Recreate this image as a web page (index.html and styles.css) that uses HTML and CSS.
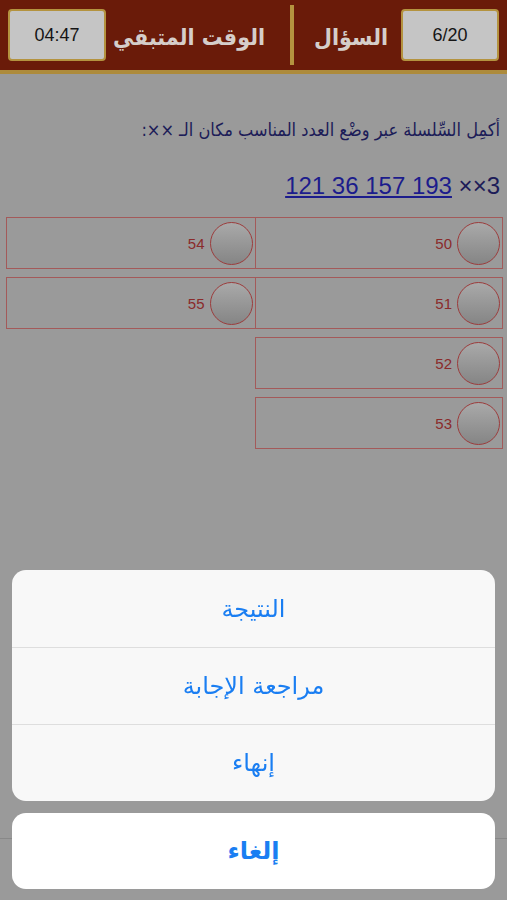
FILE: index.html
```
<!DOCTYPE html>
<html lang="ar">
<head>
<meta charset="utf-8">
<title>اختبار</title>
<link rel="stylesheet" href="styles.css">
</head>
<body>
<div class="page">
  <header class="topbar">
    <div class="box">6/20</div>
    <div class="label label-q">السؤال</div>
    <div class="sep"></div>
    <div class="label label-t">الوقت المتبقي</div>
    <div class="box">04:47</div>
  </header>

  <main class="content">
    <p class="question">أكمِل السِّلسلة عبر وضْع العدد المناسب مكان الـ ××:</p>
    <p class="series"><a href="#" class="seq">121 36 157 193</a> ××3</p>

    <div class="options">
      <div class="opt"><span class="num">50</span><span class="radio"></span></div>
      <div class="opt"><span class="num">54</span><span class="radio"></span></div>
      <div class="opt"><span class="num">51</span><span class="radio"></span></div>
      <div class="opt"><span class="num">55</span><span class="radio"></span></div>
      <div class="opt"><span class="num">52</span><span class="radio"></span></div>
      <div class="empty"></div>
      <div class="opt"><span class="num">53</span><span class="radio"></span></div>
      <div class="empty"></div>
    </div>
  </main>

  <footer class="toolbar"></footer>
</div>

<div class="sheet-layer">
  <div class="sheet">
    <div class="group">
      <div class="action">النتيجة</div>
      <div class="action">مراجعة الإجابة</div>
      <div class="action">إنهاء</div>
    </div>
    <div class="cancel">إلغاء</div>
  </div>
</div>
</body>
</html>
```
FILE: styles.css
```
html, body {
  margin: 0;
  padding: 0;
  background: #9a9a9a;
}
body {
  font-family: "DejaVu Sans", "Noto Sans", sans-serif;
}
.page {
  display: flex;
  flex-direction: column;
  min-height: 900px;
}
.topbar {
  direction: rtl;
  display: flex;
  align-items: center;
  height: 74px;
  padding: 0 8px;
  box-sizing: border-box;
  background: #6a1b09;
  border-bottom: 4px solid #ad8b3c;
}
.box {
  flex: none;
  width: 98px;
  height: 52px;
  box-sizing: border-box;
  border: 2px solid #b4933f;
  border-radius: 4px;
  background: #c5c5c5;
  color: #151515;
  font-family: "Liberation Sans", Arial, sans-serif;
  font-size: 18px;
  display: flex;
  align-items: center;
  justify-content: center;
}
.label {
  white-space: nowrap;
  text-align: center;
  color: #d5ceca;
  font-family: "DejaVu Sans Condensed", "DejaVu Sans", sans-serif;
  font-weight: bold;
  font-size: 23px;
  padding-top: 4px;
}
.label-q {
  flex: none;
  margin: 0 13px 0 20px;
}
.label-t {
  flex: 1;
  min-width: 0;
  padding-right: 18px;
}
.sep {
  flex: none;
  width: 4px;
  height: 60px;
  background: #b4933f;
}
.content {
  direction: rtl;
  padding: 0 4px 0 6px;
}
.question {
  margin: 41px 3px 0 0;
  font-family: "DejaVu Sans Condensed", "DejaVu Sans", sans-serif;
  font-size: 18px;
  color: #1c1c58;
  line-height: 30px;
}
.series {
  direction: ltr;
  text-align: right;
  margin: 27px 3px 0 0;
  font-family: "Liberation Sans", Arial, sans-serif;
  font-size: 24px;
  color: #1c1c58;
  line-height: 28px;
}
.seq {
  color: #1c1c8c;
  text-decoration: underline;
}
.options {
  margin-top: 17px;
  display: grid;
  grid-template-columns: 1fr 1fr;
  row-gap: 8px;
}
.opt {
  height: 52px;
  box-sizing: border-box;
  border: 1px solid #a35a5a;
  display: flex;
  align-items: center;
  padding-right: 2px;
  gap: 5px;
}
.options .opt:nth-child(2n) {
  margin-right: -1px;
}
.radio {
  order: -1;
  width: 41px;
  height: 41px;
  border-radius: 50%;
  border: 1.5px solid #9c3c3c;
  background: linear-gradient(#a9a9a9, #858585);
}
.num {
  font-family: "Liberation Sans", Arial, sans-serif;
  font-size: 15px;
  color: #8a2b2b;
}
.toolbar {
  margin-top: auto;
  height: 61px;
  border-top: 1px solid #888888;
}
.sheet-layer {
  position: fixed;
  left: 0;
  right: 0;
  bottom: 0;
}
.sheet {
  padding: 0 12px 11px;
  display: flex;
  flex-direction: column;
  gap: 12px;
}
.group {
  background: #f8f8f8;
  border-radius: 14px;
  overflow: hidden;
}
.action {
  height: 77px;
  display: flex;
  align-items: center;
  justify-content: center;
  font-size: 24px;
  color: #1a7ef2;
  border-top: 1px solid #dedede;
  box-sizing: border-box;
}
.action:first-child {
  border-top: none;
}
.cancel {
  height: 76px;
  background: #ffffff;
  border-radius: 14px;
  display: flex;
  align-items: center;
  justify-content: center;
  font-size: 24px;
  font-weight: bold;
  color: #1a7ef2;
}
```
